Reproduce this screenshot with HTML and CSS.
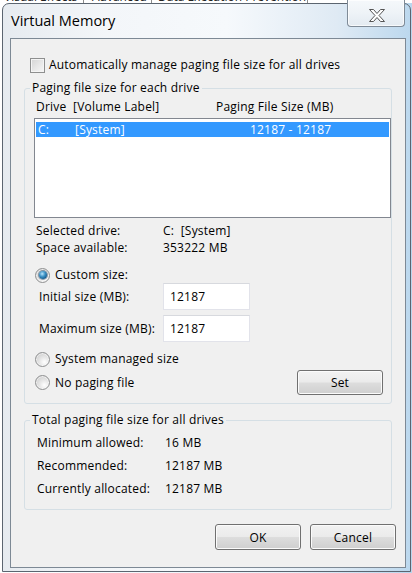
FILE: index.html
```html
<!DOCTYPE html>
<html lang="en">
<head>
<meta charset="utf-8">
<title>Virtual Memory</title>
<link rel="stylesheet" href="styles.css">
</head>
<body>
<div class="behind">
  <span class="tab tab-1">Visual Effects</span><span class="tab tab-2">Advanced</span><span class="tab tab-3">Data Execution Prevention</span>
</div>
<div class="window">
  <div class="titlebar">
    <div class="title">Virtual Memory</div>
    <div class="close">
      <svg width="18" height="15" viewBox="0 0 18 15"><path d="M1.5 1.5h4l3.5 4 3.5-4h4l-5.5 6 5.5 6h-4l-3.5-4-3.5 4h-4l5.5-6z" fill="#fff" stroke="#555" stroke-width="1" stroke-linejoin="round"/></svg>
    </div>
  </div>
  <div class="client">
    <div class="check-row"><span class="checkbox"></span><span>Automatically manage paging file size for all drives</span></div>

    <fieldset class="group group-drives">
      <legend>Paging file size for each drive</legend>
      <div class="list-header"><span class="col-drive">Drive&nbsp;&nbsp;[Volume Label]</span><span>Paging File Size (MB)</span></div>
      <div class="listbox">
        <div class="list-row selected"><span class="c-letter">C:</span><span class="c-label">[System]</span><span>12187 - 12187</span></div>
      </div>
      <div class="info info-first"><span class="info-key">Selected drive:</span><span>C:&nbsp;&nbsp;[System]</span></div>
      <div class="info info-second"><span class="info-key">Space available:</span><span>353222 MB</span></div>

      <div class="radio-row radio-custom"><span class="radio checked"></span><span>Custom size:</span></div>
      <div class="size-row"><span class="size-label">Initial size (MB):</span><input class="textbox" type="text" value="12187"></div>
      <div class="size-row size-row-second"><span class="size-label">Maximum size (MB):</span><input class="textbox" type="text" value="12187"></div>
      <div class="radio-row radio-system"><span class="radio"></span><span>System managed size</span></div>
      <div class="bottom-row">
        <div class="radio-row"><span class="radio"></span><span>No paging file</span></div>
        <button class="btn btn-set" type="button">Set</button>
      </div>
    </fieldset>

    <fieldset class="group group-total">
      <legend>Total paging file size for all drives</legend>
      <div class="total-row"><span class="total-key">Minimum allowed:</span><span>16 MB</span></div>
      <div class="total-row"><span class="total-key">Recommended:</span><span>12187 MB</span></div>
      <div class="total-row"><span class="total-key">Currently allocated:</span><span>12187 MB</span></div>
    </fieldset>

    <div class="actions">
      <button class="btn" type="button">OK</button>
      <button class="btn" type="button">Cancel</button>
    </div>
  </div>
</div>
</body>
</html>
```

FILE: styles.css
```css
* {
  box-sizing: border-box;
}

html,
body {
  margin: 0;
  padding: 0;
}

body {
  width: 412px;
  height: 573px;
  overflow: hidden;
  background: linear-gradient(90deg, #ffffff 0%, #e6f0f8 70%, #b9d7ee 100%);
  font-family: "Open Sans", "Noto Sans", sans-serif;
  font-size: 12px;
  letter-spacing: 0.2px;
  color: #000;
}

/* dialog behind (tab strip, only its bottom edge shows) */
.behind {
  height: 3px;
  overflow: hidden;
  display: flex;
  background: #ffffff;
}

.tab {
  font-size: 12px;
  line-height: 12px;
  margin-top: -9px;
  padding-left: 4px;
  border-right: 1px solid #8c8c8c;
  color: #222;
  letter-spacing: 0;
}

.tab-1 { width: 84px; }
.tab-2 { width: 68px; padding-left: 8px; }
.tab-3 { width: 156px; padding-left: 6px; }

/* window frame */
.window {
  margin-left: 2px;
  width: 409px;
  height: 569px;
  border: 1px solid #5b6570;
  border-radius: 7px 7px 0 0;
  background: linear-gradient(90deg, #e6ebf0 0%, #f3f6f9 25%, #f6f9fc 55%, #dfeaf4 82%, #bcd8ee 100%);
  display: flex;
  flex-direction: column;
}

.titlebar {
  height: 34px;
  display: flex;
  justify-content: space-between;
  align-items: flex-start;
}

.title {
  padding-left: 8px;
  margin-top: 6px;
  font-size: 14.5px;
  line-height: 22px;
  letter-spacing: 0;
  color: #000;
  text-shadow: 0 0 6px #fff;
}

.close {
  margin-top: -4px;
  margin-right: 5px;
  width: 58px;
  height: 27px;
  border: 1px solid #7f8b97;
  border-top: none;
  border-radius: 0 0 4px 4px;
  background: linear-gradient(180deg, #f5f8fb 0%, #eef3f7 50%, #e3eaf1 100%);
  box-shadow: inset 0 0 0 1px rgba(255, 255, 255, 0.7);
  display: flex;
  justify-content: center;
  align-items: center;
  padding-top: 4px;
  padding-left: 2px;
}

.close svg {
  display: block;
}

/* client area */
.client {
  margin-left: 7px;
  width: 396px;
  height: 530px;
  border: 1px solid #7d8995;
  background: #f0f0f0;
  padding: 0 13px;
}

.check-row {
  margin: 18px 0 0 6px;
  height: 16px;
  display: flex;
  align-items: center;
  gap: 4px;
  line-height: 16px;
}

.checkbox {
  width: 15px;
  height: 15px;
  flex: none;
  border: 1px solid #8e8f8f;
  background: linear-gradient(135deg, #d4d4d4 0%, #e6e6e6 50%, #f7f7f7 100%);
  box-shadow: inset 0 0 0 1px #f4f4f4;
}

/* group boxes */
.group {
  margin: 7px 0 0;
  padding: 0;
  min-width: 0;
  border: 1px solid #d5dfe5;
  border-radius: 3px;
}

.group legend {
  margin-left: 5px;
  padding: 0 2px;
  line-height: 16px;
}

.group-drives {
  padding-bottom: 8px;
}

.list-header {
  margin: 3px 0 0 11px;
  display: flex;
  line-height: 16px;
}

.col-drive {
  width: 180px;
}

.listbox {
  margin: 3px 0 0 9px;
  height: 100px;
  border: 1px solid #828790;
  background: #ffffff;
  padding: 3px 1px 0;
}

.list-row {
  height: 15px;
  line-height: 15px;
  padding-left: 2px;
  display: flex;
}

.list-row.selected {
  background: #3399ff;
  color: #ffffff;
}

.c-letter { width: 37px; }
.c-label { width: 175px; }

.info {
  padding-left: 11px;
  display: flex;
  line-height: 16px;
}

.info-first { margin-top: 5px; }
.info-second { margin-top: 1px; }

.info-key {
  width: 127px;
}

.radio-row {
  display: flex;
  align-items: center;
  height: 16px;
  gap: 5px;
  line-height: 16px;
}

.group-drives > .radio-row {
  margin-left: 10px;
}

.radio-custom { margin-top: 11px; }
.radio-system { margin-top: 9px; }

.radio {
  width: 15px;
  height: 15px;
  flex: none;
  border-radius: 50%;
  border: 1px solid #8f9091;
  background: radial-gradient(circle at 65% 70%, #ffffff 0%, #e9e9e9 35%, #cfcfcf 80%, #c4c4c4 100%);
  box-shadow: inset 0 0 0 1px rgba(255, 255, 255, 0.6);
  display: flex;
  align-items: center;
  justify-content: center;
}

.radio.checked::after {
  content: "";
  width: 8px;
  height: 8px;
  border-radius: 50%;
  background: radial-gradient(circle at 40% 35%, #b9e4fb 0%, #3e93c6 40%, #145a8e 75%, #0d3f68 100%);
  box-shadow: 0 0 0 1px rgba(40, 70, 100, 0.5);
}

.size-row {
  margin-left: 14px;
  height: 27px;
  display: flex;
  align-items: center;
}

.size-row-second {
  margin-top: 5px;
}

.size-label {
  width: 124px;
}

.textbox {
  width: 87px;
  height: 27px;
  margin: 0;
  padding: 0 0 0 6px;
  border: 1px solid #e2e3ea;
  border-top-color: #d7d9de;
  background: #ffffff;
  font-family: inherit;
  font-size: 12px;
  letter-spacing: 0.2px;
  color: #000;
  outline: none;
}

.bottom-row {
  margin: 3px 8px 0 10px;
  height: 25px;
  display: flex;
  justify-content: space-between;
  align-items: center;
}

.btn {
  width: 86px;
  height: 26px;
  margin: 0;
  padding: 0;
  border: 1px solid #707070;
  border-radius: 3px;
  background: linear-gradient(180deg, #f2f2f2 0%, #ebebeb 48%, #dddddd 52%, #cfcfcf 100%);
  box-shadow: inset 0 0 0 1px #fbfbfb;
  font-family: inherit;
  font-size: 12px;
  letter-spacing: 0.2px;
  color: #000;
}

.btn-set {
  height: 25px;
}

.group-total {
  margin-top: 8px;
  padding: 3px 0 9px;
}

.total-row {
  padding-left: 12px;
  display: flex;
  line-height: 23px;
}

.total-key {
  width: 128px;
}

.actions {
  margin: 14px -4px 0 0;
  display: flex;
  justify-content: flex-end;
  gap: 9px;
}
```
